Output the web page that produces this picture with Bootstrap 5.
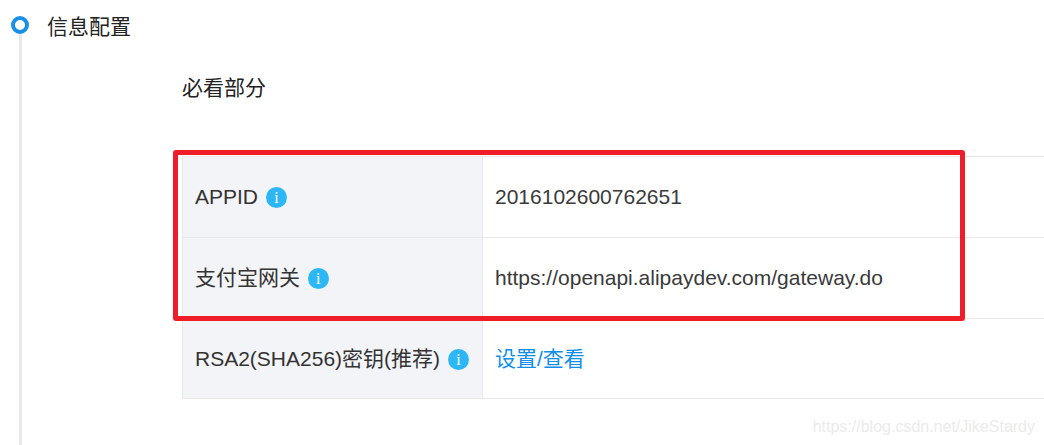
<!DOCTYPE html>
<html lang="zh">
<head>
<meta charset="utf-8">
<title>信息配置</title>
<link href="https://cdn.jsdelivr.net/npm/bootstrap@5.3.0/dist/css/bootstrap.min.css" rel="stylesheet">
<style>
html,body{height:445px;overflow:hidden;background:#fff}
body{font-family:"Liberation Sans","Noto Sans CJK SC",sans-serif;font-size:21px;color:#333;position:relative}
.page-wrap{height:445px;padding:16px 0 0 11px}
.dot-col{width:18px;flex:none}
.step-dot{width:18px;height:18px;border:4px solid #1a8fe8;border-radius:50%;background:#fff;flex:none}
.step-line{width:3px;flex:1;background:#e8e8e8;margin-left:8px}
.step-body{padding-left:18px;min-width:0;flex:1}
.step-title{color:#222;line-height:22px}
.sec-title{color:#222;line-height:24px;margin:38px 0 0 135px}
.info-table{margin:56px 0 0 135px;width:900px;border-collapse:collapse;table-layout:fixed}
.info-table th,.info-table td{height:81px;border:1px solid #e8e8e8;font-weight:400;padding:0 12px;white-space:nowrap;vertical-align:middle}
.info-table tr:last-child>*{height:80px}
.info-table tr>*:last-child{border-right:0}
.info-table th{width:300px;background:#f3f4f8;color:#333}
.info-table td{color:#3a3a3a}
.info-link{color:#108ee9;text-decoration:none}
.tip-icon{display:inline-flex;width:21px;height:21px;border-radius:50%;background:#2db7f5;color:#fff;font:16px/21px "Liberation Serif",serif;justify-content:center;margin-left:2px;vertical-align:1px}
.red-box{position:absolute;left:173px;top:150px;width:792px;height:171px;border:5px solid #ef1c2a;border-radius:3px;pointer-events:none}
.wm{position:absolute;right:9px;bottom:8px;font-size:16px;line-height:20px;color:#ebebeb}
</style>
</head>
<body>
<div class="page-wrap d-flex">
  <div class="dot-col d-flex flex-column">
    <div class="step-dot"></div>
    <div class="step-line"></div>
  </div>
  <div class="step-body">
    <div class="step-title">信息配置</div>
    <div class="sec-title">必看部分</div>
    <table class="info-table">
      <tr>
        <th>APPID <span class="tip-icon">i</span></th>
        <td>2016102600762651</td>
      </tr>
      <tr>
        <th>支付宝网关 <span class="tip-icon">i</span></th>
        <td>https://openapi.alipaydev.com/gateway.do</td>
      </tr>
      <tr>
        <th>RSA2(SHA256)密钥(推荐) <span class="tip-icon">i</span></th>
        <td><a class="info-link" href="#">设置/查看</a></td>
      </tr>
    </table>
  </div>
</div>
<div class="red-box"></div>
<div class="wm">https://blog.csdn.net/JikeStardy</div>
<script src="https://cdn.jsdelivr.net/npm/bootstrap@5.3.0/dist/js/bootstrap.bundle.min.js"></script>
</body>
</html>
